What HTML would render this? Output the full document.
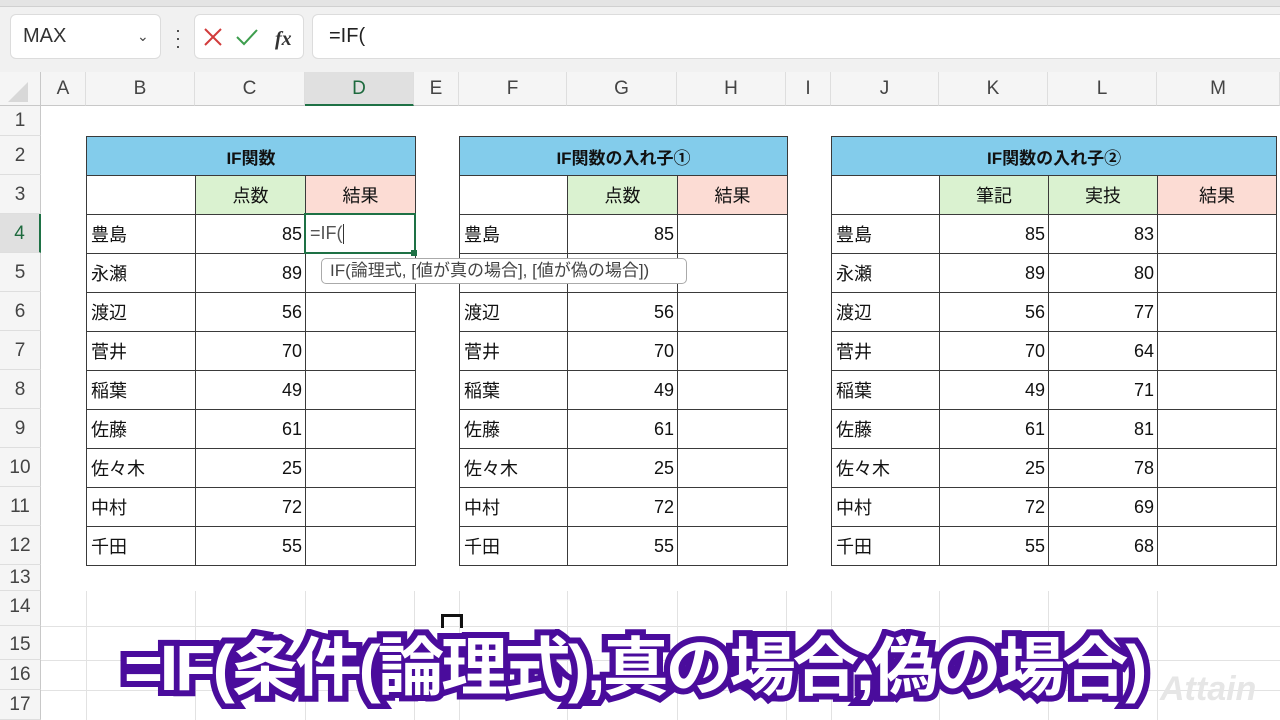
<!DOCTYPE html>
<html><head><meta charset="utf-8"><style>
*{margin:0;padding:0;box-sizing:border-box}
body{width:1280px;height:720px;overflow:hidden;background:#fff;position:relative;font-family:"Liberation Sans","Noto Sans CJK JP",sans-serif;color:#111}
.a{position:absolute}
.topbar{left:0;top:0;width:1280px;height:72px;background:#f1f1f1}
.strip{left:0;top:0;width:1280px;height:7px;background:#e4e4e4;border-bottom:1px solid #d0d0d0}
.box{background:#fff;border:1px solid #dcdcdc;border-radius:6px}
.colh{top:72px;height:34px;background:#f5f5f5;border-bottom:1px solid #c8c8c8;border-right:1px solid #dedede;text-align:center;line-height:33px;font-size:19px;color:#444}
.rowh{left:0;width:41px;background:#f5f5f5;border-right:1px solid #c8c8c8;border-bottom:1px solid #dedede;text-align:center;font-size:19px;color:#444}
table{position:absolute;border-collapse:collapse;table-layout:fixed}
td{border:1px solid #3a3a3a;height:39px;font-size:18px;padding:0 4px;white-space:nowrap}
td.n{text-align:right;padding-right:3px}
td.h{background:#83ccEB;text-align:center;font-weight:bold;font-size:17px}
td.g{background:#daf2d0;text-align:center}
td.p{background:#fcdcd4;text-align:center}
.gl{background:#e2e2e2}
.sub{left:124px;top:617px;font-size:64px;font-weight:bold;color:#fff;-webkit-text-stroke:12px #4a0c9c;paint-order:stroke fill;letter-spacing:-3px;white-space:nowrap;font-family:"Liberation Sans","Noto Sans CJK JP",sans-serif;transform:scaleX(1.04);transform-origin:left}
</style></head><body>
<div class="a topbar"></div><div class="a strip"></div>
<div class="a box" style="left:10px;top:14px;width:151px;height:45px;font-size:20px;line-height:43px;padding-left:12px;color:#333">MAX<span style="position:absolute;left:126px;top:0;font-size:14px;color:#444">&#8964;</span></div>
<div class="a" style="left:175px;top:26px;width:4px;font-size:18px;line-height:8px;color:#333">·<br>·<br>·</div>
<div class="a box" style="left:194px;top:14px;width:110px;height:45px">
<svg width="110" height="45"><path d="M10 14 L26 30 M26 14 L10 30" stroke="#d23b3b" stroke-width="2" fill="none"/><path d="M42 22 L49 29 L62 15" stroke="#3e9e4e" stroke-width="2" fill="none"/><text x="80" y="30" font-family="Liberation Serif" font-style="italic" font-weight="bold" font-size="20" fill="#333">fx</text></svg></div>
<div class="a box" style="left:312px;top:14px;width:980px;height:45px;font-size:20px;line-height:43px;padding-left:16px;color:#222">=IF(</div>

<div class="a" style="left:0;top:72px;width:41px;height:34px;background:#f5f5f5;border-bottom:1px solid #c8c8c8;border-right:1px solid #c8c8c8"><svg width="41" height="34"><path d="M8 30 L28 30 L28 10 Z" fill="#d8d8d8"/></svg></div>
<div class="a colh" style="left:41px;width:45px">A</div>
<div class="a colh" style="left:86px;width:109px">B</div>
<div class="a colh" style="left:195px;width:110px">C</div>
<div class="a colh" style="left:305px;width:109px;background:#e0e0e0;border-bottom:2px solid #1e7145;color:#1e6a3e">D</div>
<div class="a colh" style="left:414px;width:45px">E</div>
<div class="a colh" style="left:459px;width:108px">F</div>
<div class="a colh" style="left:567px;width:110px">G</div>
<div class="a colh" style="left:677px;width:109px">H</div>
<div class="a colh" style="left:786px;width:45px">I</div>
<div class="a colh" style="left:831px;width:108px">J</div>
<div class="a colh" style="left:939px;width:109px">K</div>
<div class="a colh" style="left:1048px;width:109px">L</div>
<div class="a colh" style="left:1157px;width:123px">M</div>

<div class="a rowh" style="top:106px;height:30px;line-height:30px">1</div>
<div class="a rowh" style="top:136px;height:39px;line-height:39px">2</div>
<div class="a rowh" style="top:175px;height:39px;line-height:39px">3</div>
<div class="a rowh" style="top:214px;height:39px;line-height:39px;background:#e0e0e0;border-right:2px solid #1e7145;color:#1e6a3e">4</div>
<div class="a rowh" style="top:253px;height:39px;line-height:39px">5</div>
<div class="a rowh" style="top:292px;height:39px;line-height:39px">6</div>
<div class="a rowh" style="top:331px;height:39px;line-height:39px">7</div>
<div class="a rowh" style="top:370px;height:39px;line-height:39px">8</div>
<div class="a rowh" style="top:409px;height:39px;line-height:39px">9</div>
<div class="a rowh" style="top:448px;height:39px;line-height:39px">10</div>
<div class="a rowh" style="top:487px;height:39px;line-height:39px">11</div>
<div class="a rowh" style="top:526px;height:39px;line-height:39px">12</div>
<div class="a rowh" style="top:565px;height:26px;line-height:26px">13</div>
<div class="a rowh" style="top:591px;height:35px;line-height:32px">14</div>
<div class="a rowh" style="top:626px;height:34px;line-height:38px">15</div>
<div class="a rowh" style="top:660px;height:30px;line-height:30px">16</div>
<div class="a rowh" style="top:690px;height:30px;line-height:30px">17</div>

<div class="a gl" style="left:41px;top:626px;width:1239px;height:1px"></div>
<div class="a gl" style="left:41px;top:660px;width:1239px;height:1px"></div>
<div class="a gl" style="left:41px;top:690px;width:1239px;height:1px"></div>
<div class="a gl" style="left:86px;top:591px;width:1px;height:129px"></div>
<div class="a gl" style="left:195px;top:591px;width:1px;height:129px"></div>
<div class="a gl" style="left:305px;top:591px;width:1px;height:129px"></div>
<div class="a gl" style="left:414px;top:591px;width:1px;height:129px"></div>
<div class="a gl" style="left:459px;top:591px;width:1px;height:129px"></div>
<div class="a gl" style="left:567px;top:591px;width:1px;height:129px"></div>
<div class="a gl" style="left:677px;top:591px;width:1px;height:129px"></div>
<div class="a gl" style="left:786px;top:591px;width:1px;height:129px"></div>
<div class="a gl" style="left:831px;top:591px;width:1px;height:129px"></div>
<div class="a gl" style="left:939px;top:591px;width:1px;height:129px"></div>
<div class="a gl" style="left:1048px;top:591px;width:1px;height:129px"></div>
<div class="a gl" style="left:1157px;top:591px;width:1px;height:129px"></div>

<table style="left:86px;top:136px;width:329px">
<colgroup><col style="width:109px"><col style="width:110px"><col style="width:110px"></colgroup>
<tr><td class="h" colspan="3">IF関数</td></tr>
<tr><td></td><td class="g">点数</td><td class="p">結果</td></tr>
<tr><td>豊島</td><td class="n">85</td><td></td></tr>
<tr><td>永瀬</td><td class="n">89</td><td></td></tr>
<tr><td>渡辺</td><td class="n">56</td><td></td></tr>
<tr><td>菅井</td><td class="n">70</td><td></td></tr>
<tr><td>稲葉</td><td class="n">49</td><td></td></tr>
<tr><td>佐藤</td><td class="n">61</td><td></td></tr>
<tr><td>佐々木</td><td class="n">25</td><td></td></tr>
<tr><td>中村</td><td class="n">72</td><td></td></tr>
<tr><td>千田</td><td class="n">55</td><td></td></tr>
</table>

<table style="left:459px;top:136px;width:328px">
<colgroup><col style="width:108px"><col style="width:110px"><col style="width:110px"></colgroup>
<tr><td class="h" colspan="3">IF関数の入れ子①</td></tr>
<tr><td></td><td class="g">点数</td><td class="p">結果</td></tr>
<tr><td>豊島</td><td class="n">85</td><td></td></tr>
<tr><td>永瀬</td><td class="n">89</td><td></td></tr>
<tr><td>渡辺</td><td class="n">56</td><td></td></tr>
<tr><td>菅井</td><td class="n">70</td><td></td></tr>
<tr><td>稲葉</td><td class="n">49</td><td></td></tr>
<tr><td>佐藤</td><td class="n">61</td><td></td></tr>
<tr><td>佐々木</td><td class="n">25</td><td></td></tr>
<tr><td>中村</td><td class="n">72</td><td></td></tr>
<tr><td>千田</td><td class="n">55</td><td></td></tr>
</table>

<table style="left:831px;top:136px;width:445px">
<colgroup><col style="width:108px"><col style="width:109px"><col style="width:109px"><col style="width:119px"></colgroup>
<tr><td class="h" colspan="4">IF関数の入れ子②</td></tr>
<tr><td></td><td class="g">筆記</td><td class="g">実技</td><td class="p">結果</td></tr>
<tr><td>豊島</td><td class="n">85</td><td class="n">83</td><td></td></tr>
<tr><td>永瀬</td><td class="n">89</td><td class="n">80</td><td></td></tr>
<tr><td>渡辺</td><td class="n">56</td><td class="n">77</td><td></td></tr>
<tr><td>菅井</td><td class="n">70</td><td class="n">64</td><td></td></tr>
<tr><td>稲葉</td><td class="n">49</td><td class="n">71</td><td></td></tr>
<tr><td>佐藤</td><td class="n">61</td><td class="n">81</td><td></td></tr>
<tr><td>佐々木</td><td class="n">25</td><td class="n">78</td><td></td></tr>
<tr><td>中村</td><td class="n">72</td><td class="n">69</td><td></td></tr>
<tr><td>千田</td><td class="n">55</td><td class="n">68</td><td></td></tr>
</table>

<div class="a" style="left:304px;top:213px;width:112px;height:41px;border:2px solid #1e7145;background:#fff;font-size:18px;line-height:37px;padding-left:4px;color:#555">=IF(<span style="display:inline-block;width:1px;height:20px;background:#333;vertical-align:middle"></span></div>
<div class="a" style="left:411px;top:250px;width:6px;height:6px;background:#1e7145"></div>
<div class="a" style="left:321px;top:258px;width:366px;height:26px;background:#fff;border:1px solid #aaa;border-radius:5px;font-size:17px;line-height:24px;padding-left:8px;color:#444;white-space:nowrap;overflow:hidden">IF(論理式, [値が真の場合], [値が偽の場合])</div>

<div class="a" style="left:441px;top:614px;width:22px;height:14px;border:3px solid #111;border-bottom:none"></div>
<div class="a" style="left:1160px;top:670px;font-size:34px;font-weight:bold;font-style:italic;color:#e6e6e6">Attain</div>
<div class="a sub">=IF(条件(論理式),真の場合,偽の場合)</div>
</body></html>
